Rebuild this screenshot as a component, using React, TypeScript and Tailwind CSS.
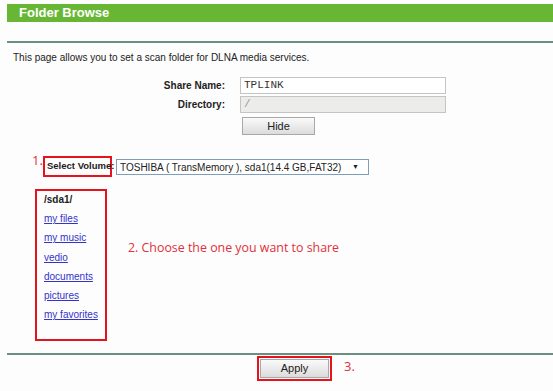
import React from "react";

const links = ["my files", "my music", "vedio", "documents", "pictures", "my favorites"];

export default function App() {
  return (
    <div
      className="w-[553px] h-[391px] bg-[#fdfdfd] overflow-hidden text-[#222]"
      style={{ fontFamily: "'Liberation Sans', Arial, sans-serif" }}
    >
      <div className="pt-[4px] pl-[7px]">
        <div className="h-[18px] bg-[#68b734] pl-[12px] flex items-center text-white font-bold text-[13px]">
          Folder Browse
        </div>
        <div className="mt-[19px] h-[2px] bg-[#6b9080]" />
      </div>
      <div className="pl-[13px] pt-[8px] text-[10px] leading-[14px]">
        This page allows you to set a scan folder for DLNA media services.
      </div>
      <div className="mt-[12px] flex flex-col">
        <div className="flex items-center h-[17px]">
          <div className="w-[225px] text-right text-[10px] font-bold">Share Name:</div>
          <div className="ml-[15px] w-[206px] h-[17px] border border-[#c4c4c4] bg-white flex items-center pl-[3px] text-[11px] text-[#333]" style={{ fontFamily: "'Liberation Mono', monospace" }}>
            TPLINK
          </div>
        </div>
        <div className="flex items-center h-[17px] mt-[2px]">
          <div className="w-[225px] text-right text-[10px] font-bold">Directory:</div>
          <div className="ml-[15px] w-[206px] h-[17px] border border-[#c4c4c4] bg-[#ececea] flex items-center pl-[3px] text-[11px] text-[#999]" style={{ fontFamily: "'Liberation Mono', monospace" }}>
            /
          </div>
        </div>
        <div className="flex mt-[4px]">
          <div className="ml-[242px] w-[73px] h-[18px] border border-[#a8a8a8] bg-gradient-to-b from-[#fafafa] to-[#dcdcdc] flex items-center justify-center text-[11px]">
            Hide
          </div>
        </div>
      </div>
      <div className="mt-[21px] flex items-start h-[21px]">
        <div className="ml-[32px] w-[11px] text-[#e0303a] text-[13px] leading-[13px] -mt-[2px]" style={{ fontFamily: "'Open Sans', sans-serif" }}>1.</div>
        <div className="relative w-[69px] h-[21px] border-2 border-[#e4141e] flex items-center pl-[2px] text-[9.5px] font-bold whitespace-nowrap overflow-visible z-10">
          Select Volume:
        </div>
        <div className="ml-[4px] mt-[3px] w-[253px] h-[16px] border border-[#7f9db9] bg-white flex items-center pl-[3px] text-[10px] whitespace-nowrap">
          TOSHIBA ( TransMemory ), sda1(14.4 GB,FAT32)
          <span className="ml-auto mr-[9px] text-[7px]">▼</span>
        </div>
      </div>
      <div className="mt-[12px] flex">
        <div className="ml-[35px] w-[72px] h-[152px] border-2 border-[#e4141e] pl-[7px] pt-[3px] text-[10px]">
          <div className="font-bold h-[12px] leading-[12px]">/sda1/</div>
          {links.map((l) => (
            <div key={l} className="h-[19.2px] flex items-end">
              <a className="text-[#3333cc] underline leading-[12px]">{l}</a>
            </div>
          ))}
        </div>
        <div className="ml-[21px] mt-[52px] text-[12.4px] leading-[14px] text-[#e0303a]" style={{ fontFamily: "'Open Sans', sans-serif" }}>
          2. Choose the one you want to share
        </div>
      </div>
      <div className="mt-[12px] ml-[7px] h-[2px] bg-[#6b9080]" />
      <div className="mt-[1px] flex items-start">
        <div className="ml-[257px] w-[75px] h-[25px] border-2 border-[#e4141e] p-[1px]">
          <div className="w-full h-full border border-[#a8a8a8] bg-gradient-to-b from-[#fafafa] to-[#dcdcdc] flex items-center justify-center text-[11px]">
            Apply
          </div>
        </div>
        <div className="ml-[12px] mt-[3px] text-[13px] leading-[14px] text-[#e0303a]" style={{ fontFamily: "'Open Sans', sans-serif" }}>3.</div>
      </div>
    </div>
  );
}
